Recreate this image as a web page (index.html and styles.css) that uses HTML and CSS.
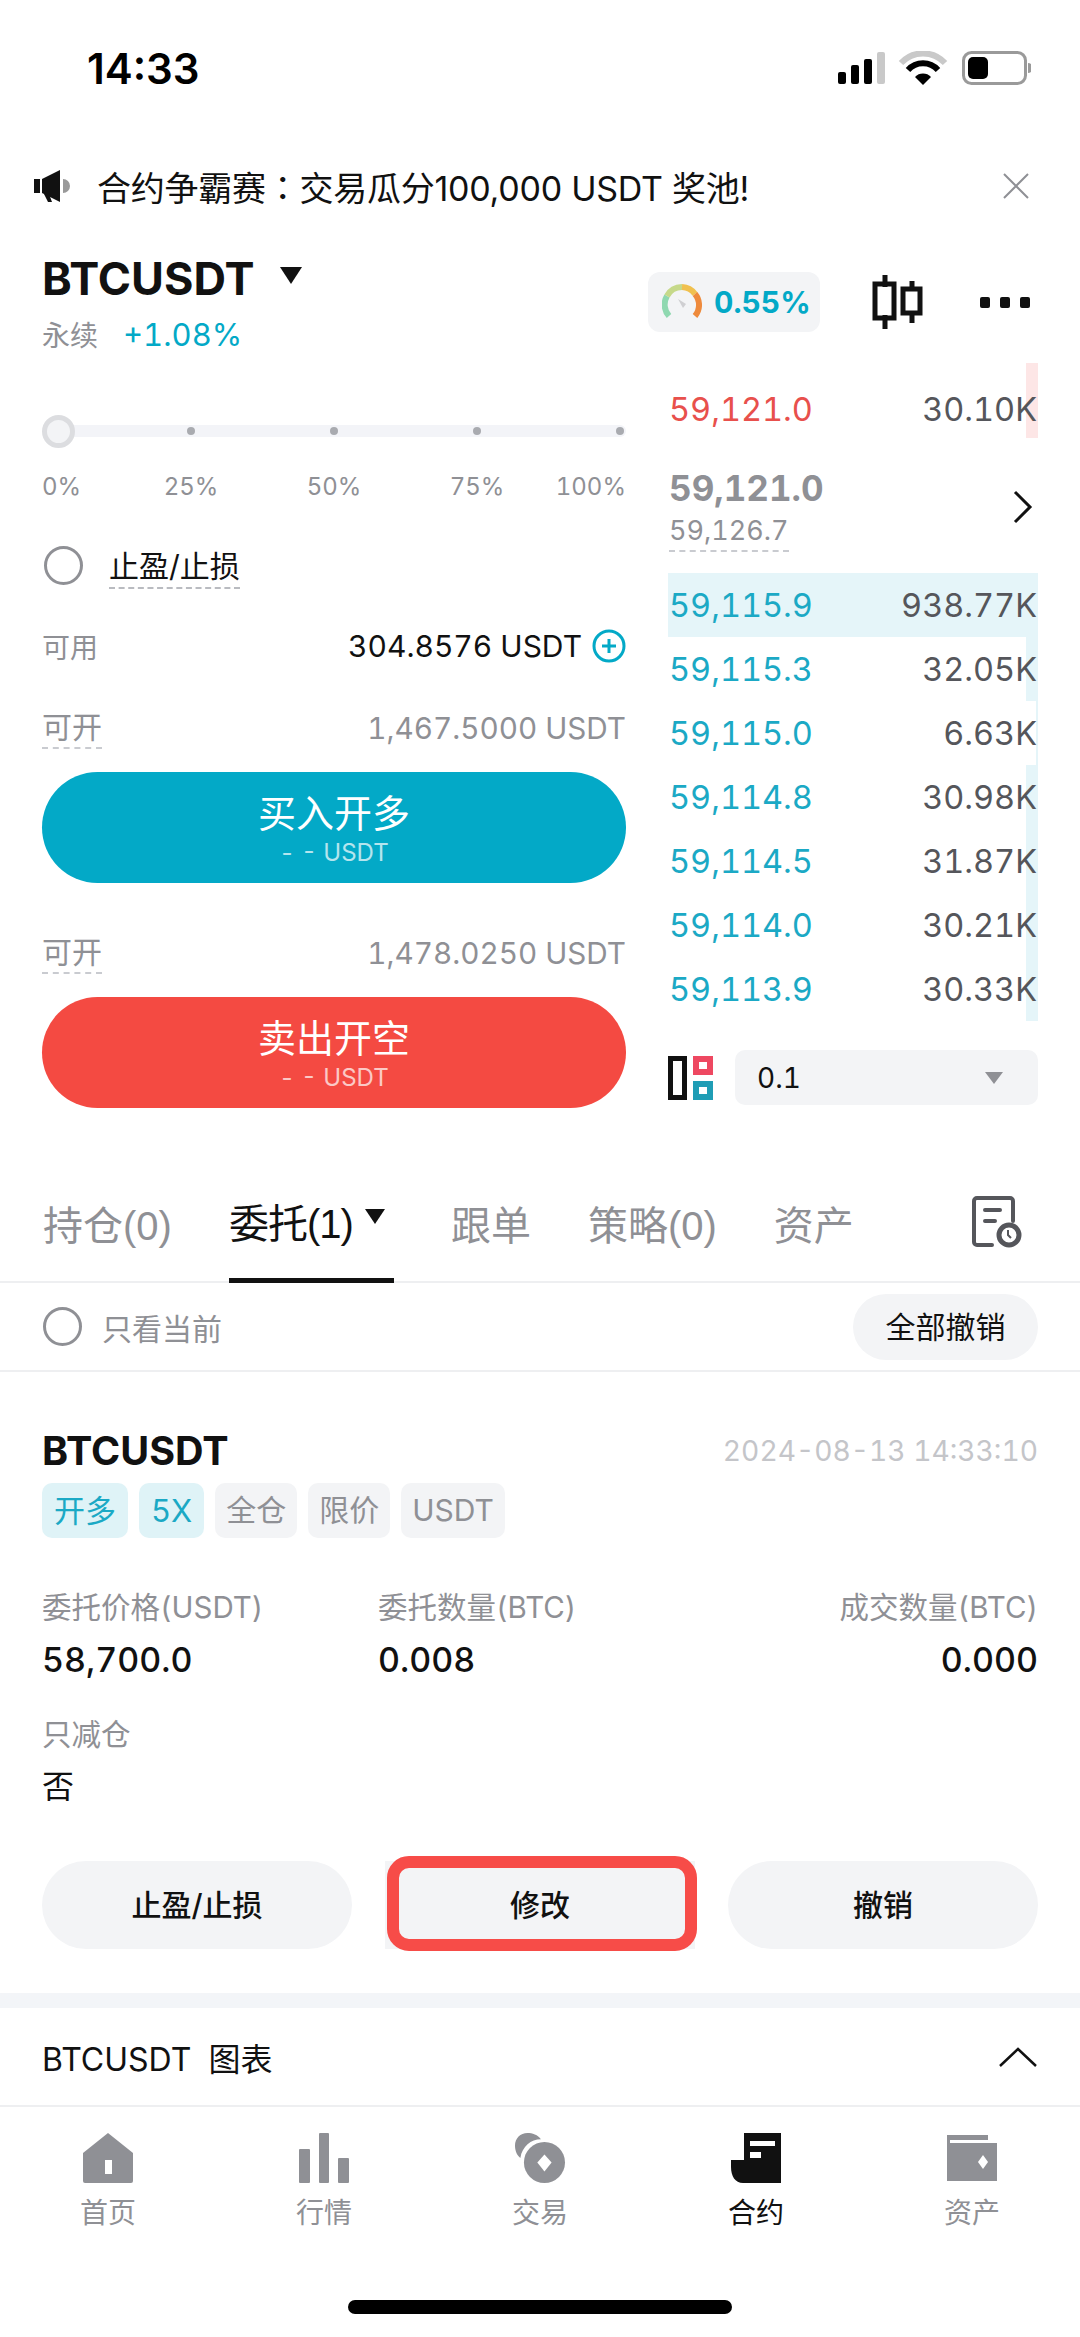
FILE: index.html
```html
<!DOCTYPE html>
<html>
  <head>
    <meta charset="UTF-8">
    <title>BTCUSDT</title>
    <link rel="stylesheet" href="styles.css">
  </head>
  <body>
    <div class="status">
      <span class="clock">14:33</span>
      <svg class="status-icons" width="193" height="34" viewBox="0 0 193 34">
        <rect x="0" y="21" width="8" height="12" rx="2" fill="#000"/>
        <rect x="13" y="14" width="8" height="19" rx="2" fill="#000"/>
        <rect x="26" y="8" width="8" height="25" rx="2" fill="#000"/>
        <rect x="39" y="1" width="8" height="32" rx="2" fill="#c9c9c9"/>
        <path d="M63 12a30 30 0 0 1 44 0" fill="none" stroke="#c9c9c9" stroke-width="6"/>
        <path d="M70 19a20 20 0 0 1 30 0" fill="none" stroke="#000" stroke-width="6"/>
        <path d="M77 26l8 8 8-8a11 11 0 0 0-16 0z" fill="#000"/>
        <rect x="125.500" y="1.500" width="62" height="31" rx="8" fill="none" stroke="#9a9a9a" stroke-width="3"/>
        <rect x="130" y="6" width="20" height="22" rx="5" fill="#000"/>
        <path d="M190 12a5 5 0 0 1 0 10z" fill="#9a9a9a"/>
      </svg>
    </div>

    <div class="notice">
      <svg width="36" height="32" viewBox="0 0 36 32">
        <path d="M0 9h6v14H0z" fill="#111"/>
        <path d="M8 9l18-9v32L8 23z" fill="#111"/>
        <path d="M29 9a7 7 0 0 1 0 14z" fill="#999"/>
        <path d="M10 24l4 8h4l-3-8z" fill="#111"/>
      </svg>
      <span class="notice-text">合约争霸赛<span class="colon">：</span>交易瓜分100,000 USDT 奖池!</span>
      <svg class="notice-close" width="28" height="28" viewBox="0 0 28 28">
        <path d="M2 2l24 24M26 2L2 26" stroke="#8f9095" stroke-width="2" fill="none"/>
      </svg>
    </div>

    <div class="trade">
      <div class="left">
        <div class="pair-row">
          <span class="pair">BTCUSDT</span>
          <i class="tri tri-black"></i>
        </div>
        <div class="pair-sub">
          <span class="perp">永续</span>
          <span class="change">+1.08%</span>
        </div>

        <div class="slider">
          <div class="track"></div>
          <i class="thumb"></i>
          <i class="tick tick1"></i>
          <i class="tick tick2"></i>
          <i class="tick tick3"></i>
          <i class="tick tick4"></i>
        </div>
        <div class="marks">
          <span>0%</span><span>25%</span><span>50%</span><span>75%</span><span>100%</span>
        </div>

        <div class="tp-row">
          <i class="radio"></i>
          <span class="tp-label">止盈/止损</span>
        </div>

        <div class="line avail">
          <span class="avail-label">可用</span>
          <span class="avail-value">304.8576 USDT
            <svg width="34" height="34" viewBox="0 0 34 34">
              <circle cx="17" cy="17" r="15" fill="none" stroke="#03a9c7" stroke-width="3"/>
              <path d="M10 17h14M17 10v14" stroke="#03a9c7" stroke-width="3"/>
            </svg>
          </span>
        </div>

        <div class="line open-line">
          <span class="open-label">可开</span>
          <span class="open-value">1,467.5000 USDT</span>
        </div>
        <div class="btn-big btn-buy">
          <span class="btn-title">买入开多</span>
          <span class="btn-sub">- - USDT</span>
        </div>

        <div class="line open-line second">
          <span class="open-label">可开</span>
          <span class="open-value">1,478.0250 USDT</span>
        </div>
        <div class="btn-big btn-sell">
          <span class="btn-title">卖出开空</span>
          <span class="btn-sub">- - USDT</span>
        </div>
      </div>

      <div class="right">
        <div class="tools">
          <div class="fund">
            <svg width="40" height="36" viewBox="0 0 40 36">
              <path d="M7 32A17 17 0 0 1 5 12" fill="none" stroke="#8fd8b0" stroke-width="6"/>
              <path d="M5 12A17 17 0 0 1 20 3" fill="none" stroke="#c6d98a" stroke-width="6"/>
              <path d="M20 3A17 17 0 0 1 33 10" fill="none" stroke="#f0c04f" stroke-width="6"/>
              <path d="M33 10A17 17 0 0 1 33 32" fill="none" stroke="#ee8a3c" stroke-width="6"/>
              <path d="M16 15l8 5-3 4z" fill="#cfcfd2"/>
            </svg>
            <span class="fund-value">0.55%</span>
          </div>
          <svg class="candles" width="54" height="54" viewBox="0 0 54 54">
            <path d="M13 0v12M13 40v14M40 6v10M40 38v10" stroke="#111" stroke-width="5"/>
            <rect x="3" y="9" width="19" height="34" fill="none" stroke="#111" stroke-width="5"/>
            <rect x="31" y="14" width="17" height="24" fill="none" stroke="#111" stroke-width="5"/>
          </svg>
          <div class="dots"><i></i><i></i><i></i></div>
        </div>

        <div class="ask">
          <i class="depth depth-ask"></i>
          <span class="px px-ask">59,121.0</span>
          <span class="amt">30.10K</span>
        </div>

        <div class="mid">
          <div>
            <div class="mid-price">59,121.0</div>
            <div class="mark-price">59,126.7</div>
          </div>
          <svg width="20" height="34" viewBox="0 0 20 34">
            <path d="M2 2l15 15L2 32" fill="none" stroke="#111" stroke-width="3"/>
          </svg>
        </div>

        <div class="bid bid-full">
          <span class="px">59,115.9</span><span class="amt">938.77K</span>
        </div>
        <div class="bid">
          <i class="depth" style="width:12px"></i>
          <span class="px">59,115.3</span><span class="amt">32.05K</span>
        </div>
        <div class="bid">
          <i class="depth" style="width:2px"></i>
          <span class="px">59,115.0</span><span class="amt">6.63K</span>
        </div>
        <div class="bid">
          <i class="depth" style="width:12px"></i>
          <span class="px">59,114.8</span><span class="amt">30.98K</span>
        </div>
        <div class="bid">
          <i class="depth" style="width:12px"></i>
          <span class="px">59,114.5</span><span class="amt">31.87K</span>
        </div>
        <div class="bid">
          <i class="depth" style="width:12px"></i>
          <span class="px">59,114.0</span><span class="amt">30.21K</span>
        </div>
        <div class="bid">
          <i class="depth" style="width:12px"></i>
          <span class="px">59,113.9</span><span class="amt">30.33K</span>
        </div>

        <div class="book-foot">
          <svg width="46" height="44" viewBox="0 0 46 44">
            <rect x="2.500" y="2.500" width="14" height="39" fill="#fff" stroke="#111" stroke-width="5"/>
            <rect x="25" y="0" width="20" height="19" fill="#ee4861"/>
            <rect x="31" y="6" width="8" height="7" fill="#fff"/>
            <rect x="25" y="25" width="20" height="19" fill="#1f9db5"/>
            <rect x="31" y="31" width="8" height="7" fill="#fff"/>
          </svg>
          <div class="step">
            <span>0.1</span>
            <i class="tri tri-gray"></i>
          </div>
        </div>
      </div>
    </div>

    <div class="tabs">
      <span class="tab">持仓(0)</span>
      <span class="tab tab-on">委托(1)<i class="tri tri-tab"></i></span>
      <span class="tab">跟单</span>
      <span class="tab">策略(0)</span>
      <span class="tab">资产</span>
      <svg class="tab-icon" width="50" height="52" viewBox="0 0 50 52">
        <path d="M20 49H5a3 3 0 0 1-3-3V5a3 3 0 0 1 3-3h33a3 3 0 0 1 3 3v20" fill="none" stroke="#55565b" stroke-width="4" stroke-linecap="round"/>
        <path d="M13 14h15M13 25h10" stroke="#55565b" stroke-width="4" stroke-linecap="round"/>
        <circle cx="37" cy="39" r="10" fill="#fff" stroke="#55565b" stroke-width="5"/>
        <path d="M36 34v5l3 3" fill="none" stroke="#55565b" stroke-width="2"/>
      </svg>
    </div>

    <div class="filter">
      <i class="radio"></i>
      <span class="filter-label">只看当前</span>
      <span class="cancel-all">全部撤销</span>
    </div>

    <div class="order">
      <div class="order-head">
        <span class="order-pair">BTCUSDT</span>
        <span class="order-time">2024-08-13 14:33:10</span>
      </div>
      <div class="tags">
        <span class="tag tag-on">开多</span>
        <span class="tag tag-on">5X</span>
        <span class="tag">全仓</span>
        <span class="tag">限价</span>
        <span class="tag">USDT</span>
      </div>
      <div class="fields">
        <div class="field">
          <span class="field-label">委托价格(USDT)</span>
          <span class="field-value">58,700.0</span>
        </div>
        <div class="field">
          <span class="field-label">委托数量(BTC)</span>
          <span class="field-value">0.008</span>
        </div>
        <div class="field field-end">
          <span class="field-label">成交数量(BTC)</span>
          <span class="field-value">0.000</span>
        </div>
      </div>
      <div class="reduce">
        <span class="field-label">只减仓</span>
        <span class="reduce-value">否</span>
      </div>
      <div class="actions">
        <span class="action">止盈/止损</span>
        <span class="action action-marked">修改<i class="marker"></i></span>
        <span class="action">撤销</span>
      </div>
    </div>

    <div class="band"></div>

    <div class="chart-row">
      <span>BTCUSDT&nbsp; 图表</span>
      <svg width="38" height="20" viewBox="0 0 38 20">
        <path d="M1 19L19 2l18 17" fill="none" stroke="#111" stroke-width="2.500"/>
      </svg>
    </div>

    <div class="nav">
      <div class="nav-item">
        <svg width="50" height="50" viewBox="0 0 50 50">
          <path d="M25 0L50 20V48a2 2 0 0 1-2 2H2a2 2 0 0 1-2-2V20z" fill="#8f9095"/>
          <rect x="22" y="27" width="7" height="14" fill="#fff"/>
        </svg>
        <span>首页</span>
      </div>
      <div class="nav-item">
        <svg width="50" height="50" viewBox="0 0 50 50">
          <rect x="0" y="16" width="11" height="34" rx="1" fill="#8f9095"/>
          <rect x="20" y="0" width="10" height="50" rx="1" fill="#8f9095"/>
          <rect x="39" y="25" width="11" height="25" rx="1" fill="#8f9095"/>
        </svg>
        <span>行情</span>
      </div>
      <div class="nav-item">
        <svg width="56" height="56" viewBox="0 0 56 56">
          <path d="M14 0c5 0 12 2 15 7C18 7 8 15 6 28 1 24 0 18 0 14 0 6 6 0 14 0z" fill="#8f9095"/>
          <circle cx="33" cy="33" r="23" fill="#8f9095"/>
          <path d="M33 24l8 9-8 10-8-10z" fill="#fff"/>
        </svg>
        <span>交易</span>
      </div>
      <div class="nav-item nav-on">
        <svg width="50" height="50" viewBox="0 0 50 50">
          <path d="M13 0h37v50H12C4 50 0 43 0 34v-7h13z" fill="#111"/>
          <rect x="19" y="8" width="25" height="5" fill="#fff"/>
          <rect x="19" y="19" width="11" height="6" fill="#fff"/>
        </svg>
        <span>合约</span>
      </div>
      <div class="nav-item">
        <svg width="50" height="46" viewBox="0 0 50 46">
          <rect x="0" y="0" width="41" height="5" fill="#8f9095"/>
          <path d="M0 5h3v3h47v38H0z" fill="#8f9095"/>
          <path d="M36 20l5 7-5 7-5-7z" fill="#fff"/>
        </svg>
        <span>资产</span>
      </div>
    </div>

    <div class="home-bar"><i></i></div>
  </body>
</html>
```

FILE: styles.css
```css
* {
  box-sizing: border-box;
}
body {
  margin: 0;
  width: 1080px;
  height: 2337px;
  overflow: hidden;
  background: #fff;
  color: #111;
  font-family: Inter, "Noto Sans CJK SC", sans-serif;
  font-variant-numeric: tabular-nums;
}
i {
  display: block;
}

/* status bar */
.status {
  height: 136px;
  display: flex;
  align-items: center;
  justify-content: space-between;
  padding: 0 49px 0 87px;
}
.clock {
  font-size: 42px;
  font-weight: 600;
  color: #000;
  font-variant-numeric: normal;
}

/* notice */
.notice {
  height: 100px;
  display: flex;
  align-items: center;
  padding: 0 50px 0 34px;
}
.notice-text {
  margin-left: 27px;
  font-size: 34px;
  letter-spacing: -0.25px;
  color: #111;
  font-variant-numeric: normal;
}
.colon {
  font-family: "Noto Sans CJK TC", sans-serif;
}
.notice-close {
  margin-left: auto;
}

/* trade area */
.trade {
  display: flex;
  height: 929px;
  padding-left: 42px;
}
.left {
  width: 584px;
  flex: none;
}
.right {
  width: 390px;
  margin-left: 22px;
  flex: none;
}
.pair-row {
  margin-top: 22px;
  height: 40px;
  display: flex;
  align-items: center;
}
.pair {
  font-size: 45px;
  font-weight: 700;
}
.tri {
  width: 0;
  height: 0;
  border-style: solid;
  border-color: transparent;
}
.tri-black {
  margin-left: 25px;
  margin-bottom: 6px;
  border-width: 17px 11px 0;
  border-top-color: #111;
}
.pair-sub {
  margin-top: 16px;
  height: 40px;
  display: flex;
  align-items: center;
}
.perp {
  font-size: 28px;
  color: #8f9095;
}
.change {
  margin-left: 25px;
  font-size: 31px;
  color: #03a9c7;
}

.slider {
  position: relative;
  margin-top: 61px;
  height: 32px;
  display: flex;
  align-items: center;
}
.track {
  flex: 1;
  height: 12px;
  border-radius: 6px;
  background: #f3f4f8;
}
.thumb {
  position: absolute;
  left: 0;
  top: 0;
  width: 33px;
  height: 33px;
  border-radius: 50%;
  background: #f3f4f6;
  border: 5px solid #dcdde0;
}
.tick {
  position: absolute;
  top: 12px;
  width: 8px;
  height: 8px;
  border-radius: 50%;
  background: #a9abb0;
}
.tick1 { left: 145px; }
.tick2 { left: 288px; }
.tick3 { left: 431px; }
.tick4 { left: 574px; }
.marks {
  margin-top: 23px;
  height: 32px;
  display: grid;
  grid-template-columns: 77.5px 143px 143px 143px 77.5px;
  align-items: center;
  text-align: center;
  font-size: 24px;
  color: #8f9095;
}
.marks span:first-child {
  text-align: left;
}
.marks span:last-child {
  text-align: right;
}

.tp-row {
  margin-top: 39px;
  height: 48px;
  display: flex;
  align-items: center;
}
.radio {
  width: 39px;
  height: 39px;
  flex: none;
  margin-left: 2px;
  border-radius: 50%;
  border: 3px solid #8f9095;
}
.tp-label {
  margin-left: 26px;
  height: 48px;
  line-height: 50px;
  font-size: 30px;
  color: #111;
  border-bottom: 2px dashed #b9bbc0;
}
.line {
  display: flex;
  justify-content: space-between;
  align-items: center;
}
.avail {
  margin-top: 37px;
  height: 40px;
}
.avail-label {
  font-size: 28px;
  color: #8f9095;
}
.avail-value {
  display: flex;
  align-items: center;
  gap: 10px;
  font-size: 30px;
  color: #111;
}
.open-line {
  margin-top: 41px;
  height: 42px;
}
.open-line.second {
  margin-top: 49px;
}
.open-label {
  height: 42px;
  line-height: 40px;
  font-size: 30px;
  color: #8f9095;
  border-bottom: 2px dashed #c9cbd0;
}
.open-value {
  font-size: 29.700px;
  color: #8f9095;
}
.btn-big {
  margin-top: 23px;
  height: 111px;
  border-radius: 56px;
  display: flex;
  flex-direction: column;
  align-items: center;
  color: #fff;
}
.btn-buy {
  background: #03a9c7;
}
.btn-sell {
  background: #f44a42;
}
.btn-title {
  margin-top: 18px;
  height: 46px;
  line-height: 46px;
  font-size: 38px;
}
.btn-sub {
  height: 34px;
  line-height: 34px;
  font-size: 24px;
  opacity: 0.7;
}

/* right column */
.tools {
  margin-top: 36px;
  height: 60px;
  padding-right: 8px;
  display: flex;
  align-items: center;
}
.fund {
  width: 172px;
  height: 60px;
  display: flex;
  align-items: center;
  gap: 12px;
  padding-left: 14px;
  border-radius: 12px;
  background: #f3f4f6;
  flex: none;
}
.fund-value {
  font-size: 30px;
  font-weight: 700;
  color: #03a9c7;
}
.candles {
  margin-left: 52px;
}
.dots {
  margin-left: auto;
  display: flex;
  gap: 10px;
}
.dots i {
  width: 10px;
  height: 11px;
  border-radius: 2px;
  background: #111;
}
.ask, .bid {
  position: relative;
  margin-left: 20px;
  display: flex;
  justify-content: space-between;
  padding: 0 1px;
  font-size: 32.500px;
}
.ask {
  margin-top: 31px;
  height: 75px;
  padding-top: 27px;
  line-height: 40px;
}
.bid {
  height: 64px;
  align-items: center;
}
.bid-full {
  background: #e5f5f9;
}
.depth {
  position: absolute;
  top: 0;
  right: 0;
  bottom: 0;
  background: #e5f5f9;
}
.depth-ask {
  width: 12px;
  background: #fde6e6;
}
.px {
  position: relative;
  color: #1ba9c5;
}
.px-ask {
  color: #e8504c;
}
.amt {
  position: relative;
  color: #55565b;
}
.mid {
  margin-left: 20px;
  height: 135px;
  padding: 29px 5px 0 1px;
  display: flex;
  justify-content: space-between;
  align-items: flex-start;
}
.mid svg {
  margin-top: 23px;
}
.mid-price {
  height: 42px;
  line-height: 42px;
  font-size: 35px;
  font-weight: 700;
  color: #8f9095;
}
.mark-price {
  display: inline-block;
  margin-top: 3px;
  height: 40px;
  line-height: 38px;
  font-size: 27px;
  color: #8f9095;
  border-bottom: 2px dashed #c9cbd0;
}
.book-foot {
  margin: 29px 0 0 20px;
  display: flex;
  align-items: center;
  justify-content: space-between;
}
.step {
  width: 303px;
  height: 55px;
  display: flex;
  align-items: center;
  justify-content: space-between;
  padding: 0 35px 0 22px;
  border-radius: 10px;
  background: #f3f4f6;
  font-size: 28px;
}
.tri-gray {
  border-width: 12px 9px 0;
  border-top-color: #8f9095;
}

/* tabs */
.tabs {
  height: 118px;
  display: flex;
  align-items: flex-end;
  gap: 57px;
  padding-left: 43px;
  border-bottom: 2px solid #eeeff1;
}
.tab {
  height: 100%;
  display: flex;
  align-items: center;
  font-family: "Liberation Sans", "Noto Sans CJK SC", sans-serif;
  font-size: 40px;
  color: #8f9095;
}
.tab-on {
  color: #111;
  border-bottom: 5px solid #111;
  width: 165px;
  margin-bottom: -2px;
  height: 120px;
  flex: none;
  letter-spacing: -1px;
  white-space: nowrap;
}
.tri-tab {
  margin-left: 12px;
  margin-bottom: 8px;
  border-width: 15px 10px 0;
  border-top-color: #111;
}
.tab-icon {
  margin: 0 58px 33px auto;
}

.filter {
  height: 89px;
  display: flex;
  align-items: center;
  padding: 0 42px;
  border-bottom: 2px solid #eeeff1;
}
.filter .radio {
  margin-left: 1px;
}
.filter-label {
  margin-left: 20px;
  font-size: 30px;
  color: #8f9095;
}
.cancel-all {
  margin-left: auto;
  width: 185px;
  height: 66px;
  border-radius: 33px;
  background: #f3f4f6;
  font-size: 30px;
  line-height: 66px;
  text-align: center;
  color: #111;
}

/* order card */
.order {
  padding: 0 42px;
}
.order-head {
  margin-top: 56px;
  height: 46px;
  display: flex;
  justify-content: space-between;
  align-items: center;
}
.order-pair {
  font-size: 39.500px;
  font-weight: 700;
}
.order-time {
  font-size: 28.200px;
  color: #c4c5c9;
}
.tags {
  margin-top: 9px;
  display: flex;
  gap: 11px;
}
.tag {
  height: 55px;
  padding: 0 11px;
  border-radius: 10px;
  background: #f3f4f6;
  font-size: 30px;
  line-height: 55px;
  color: #8f9095;
}
.tag-on {
  padding: 0 12px;
  font-size: 31px;
  background: #dff3f7;
  color: #1ba9c5;
}
.fields {
  margin-top: 46px;
  display: grid;
  grid-template-columns: 336px 1fr auto;
}
.field {
  display: flex;
  flex-direction: column;
}
.field-end {
  align-items: flex-end;
}
.field-label {
  height: 46px;
  line-height: 46px;
  font-size: 29.500px;
  color: #8f9095;
}
.field-value {
  margin-top: 7px;
  height: 46px;
  line-height: 46px;
  font-size: 34px;
  font-weight: 500;
}
.reduce {
  margin-top: 28px;
  display: flex;
  flex-direction: column;
}
.reduce-value {
  margin-top: 7px;
  height: 46px;
  line-height: 46px;
  font-size: 32px;
}
.actions {
  margin-top: 51px;
  display: grid;
  grid-template-columns: repeat(3, 310px);
  gap: 33px;
}
.action {
  position: relative;
  height: 88px;
  border-radius: 44px;
  background: #f3f4f6;
  font-size: 30px;
  font-weight: 500;
  line-height: 88px;
  text-align: center;
}
.action-marked {
  border-radius: 0;
}
.marker {
  position: absolute;
  left: 2px;
  right: -2px;
  top: -5px;
  bottom: -2px;
  border: 12px solid #f74c48;
  border-radius: 22px;
}

.band {
  margin-top: 44px;
  height: 15px;
  background: #f3f5f8;
}
.chart-row {
  height: 99px;
  display: flex;
  align-items: center;
  justify-content: space-between;
  padding: 0 43px 0 42px;
  font-size: 32px;
  border-bottom: 2px solid #eeeff1;
}

/* bottom nav */
.nav {
  display: flex;
  height: 130px;
}
.nav-item {
  flex: 1;
  display: flex;
  flex-direction: column;
  align-items: center;
  font-size: 28px;
  color: #8f9095;
  padding-top: 26px;
}
.nav-item svg {
  height: 50px;
  margin-bottom: 8px;
}
.nav-on {
  color: #111;
}
.home-bar {
  display: flex;
  justify-content: center;
  padding-top: 63px;
}
.home-bar i {
  width: 384px;
  height: 14px;
  border-radius: 7px;
  background: #000;
}
```
